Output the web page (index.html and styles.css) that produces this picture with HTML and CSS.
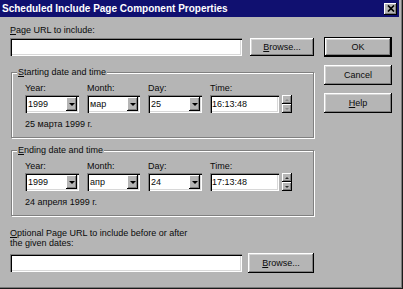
FILE: index.html
```html
<!DOCTYPE html>
<html>
<head>
<meta charset="utf-8">
<title>Scheduled Include Page Component Properties</title>
<link rel="stylesheet" href="styles.css">
</head>
<body>
<div class="window">
  <div class="titlebar">
    <span class="title">Scheduled Include Page Component Properties</span>
    <span class="close"><svg width="8" height="7" viewBox="0 0 8 7"><path d="M1 0.5 L7 6.5 M7 0.5 L1 6.5" stroke="#000" stroke-width="1.7" fill="none"/></svg></span>
  </div>
  <div class="client">
    <div class="main">
      <div class="label url-label"><u>P</u>age URL to include:</div>
      <div class="url-row">
        <div class="field url-field"></div>
        <div class="btn browse"><span><u>B</u>rowse...</span></div>
      </div>

      <fieldset class="group">
        <legend><u>S</u>tarting date and time</legend>
        <div class="date-grid">
          <div class="col"><div class="label">Year:</div><div class="field combo"><span class="val">1999</span><span class="drop"></span></div></div>
          <div class="col"><div class="label">Month:</div><div class="field combo"><span class="val">мар</span><span class="drop"></span></div></div>
          <div class="col"><div class="label">Day:</div><div class="field combo"><span class="val">25</span><span class="drop"></span></div></div>
          <div class="col"><div class="label">Time:</div><div class="time-row"><div class="field time">16:13:48</div><div class="spin light"><span class="up"></span><span class="down"></span></div></div></div>
        </div>
        <div class="date-text">25 марта 1999 г.</div>
      </fieldset>

      <fieldset class="group group-end">
        <legend><u>E</u>nding date and time</legend>
        <div class="date-grid">
          <div class="col"><div class="label">Year:</div><div class="field combo"><span class="val">1999</span><span class="drop"></span></div></div>
          <div class="col"><div class="label">Month:</div><div class="field combo"><span class="val">апр</span><span class="drop"></span></div></div>
          <div class="col"><div class="label">Day:</div><div class="field combo"><span class="val">24</span><span class="drop"></span></div></div>
          <div class="col"><div class="label">Time:</div><div class="time-row"><div class="field time">17:13:48</div><div class="spin"><span class="up"></span><span class="down"></span></div></div></div>
        </div>
        <div class="date-text">24 апреля 1999 г.</div>
      </fieldset>

      <div class="label opt-label"><u>O</u>ptional Page URL to include before or after<br>the given dates:</div>
      <div class="opt-row">
        <div class="field url-field"></div>
        <div class="btn browse2"><span><u>B</u>rowse...</span></div>
      </div>
    </div>
    <div class="side">
      <div class="btn default">OK</div>
      <div class="btn">Cancel</div>
      <div class="btn"><span><u>H</u>elp</span></div>
    </div>
  </div>
</div>
</body>
</html>
```

FILE: styles.css
```css
* { box-sizing: border-box; }
html, body { margin: 0; padding: 0; }
body {
  width: 403px;
  height: 289px;
  overflow: hidden;
  background: #b5b5b5;
  font-family: "Liberation Sans", Arial, sans-serif;
  font-size: 9px;
  color: #0a0a0a;
}
u { text-decoration: underline; text-underline-offset: 1px; }

.window {
  width: 403px;
  height: 289px;
  display: flex;
  flex-direction: column;
  box-shadow: inset -1px -1px #1a1a1a, inset -2px -2px #7a7a7a;
}

.titlebar {
  height: 17px;
  margin-right: 4px;
  background: #101070;
  display: flex;
  align-items: center;
  padding: 0 2px;
}
.title {
  flex: 1;
  color: #fff;
  font-weight: bold;
  font-size: 10px;
  white-space: nowrap;
}
.close {
  width: 13px;
  height: 12px;
  background: #b5b5b5;
  display: flex;
  align-items: center;
  justify-content: center;
  box-shadow: inset -1px -1px #000, inset 1px 1px #fff, inset -2px -2px #808080;
}

.client {
  display: grid;
  grid-template-columns: 304px 68px;
  column-gap: 10px;
  padding-left: 10px;
  align-items: start;
}

.main { padding-top: 8px; }
.label { line-height: 11px; white-space: nowrap; }

.url-row { display: flex; gap: 8px; margin-top: 2px; }
.field {
  height: 18px;
  background: #fff;
  box-shadow: inset 1px 1px #808080, inset 2px 2px #000, inset -1px -1px #fff, inset -2px -2px #d8d8d8;
}
.url-field { width: 232px; }

.btn {
  display: flex;
  align-items: center;
  justify-content: center;
  background: #b5b5b5;
  box-shadow: inset -1px -1px #000, inset 1px 1px #fff, inset -2px -2px #808080, inset 2px 2px #d4d4d4;
  white-space: nowrap;
}
.browse { width: 64px; height: 18px; }
.browse2 { width: 66px; height: 20px; }

.group {
  margin: 10px 0 0 1px;
  width: 303px;
  min-width: 0;
  padding: 5px 0 7px 13px;
  border: 1px solid #808080;
  box-shadow: inset 1px 1px #fff, 1px 1px #fff;
}
.group-end { margin-top: 6px; }
.group legend {
  font-size: 9px;
  line-height: 12px;
  padding: 0 1px;
  margin-left: -8px;
  background: #b5b5b5;
}

.date-grid {
  display: grid;
  grid-template-columns: 54px 53px 54px 82px;
  column-gap: 8px;
}
.col .label { margin-bottom: 1px; }
.combo {
  display: flex;
  align-items: center;
  padding: 2px 2px 2px 3px;
}
.val { flex: 1; }
.drop {
  width: 11px;
  height: 14px;
  background: #b5b5b5;
  box-shadow: inset -1px -1px #000, inset 1px 1px #fff, inset -2px -2px #808080;
  display: flex;
  align-items: center;
  justify-content: center;
}
.drop::after {
  content: "";
  border-left: 3px solid transparent;
  border-right: 3px solid transparent;
  border-top: 3px solid #000;
}

.time-row { display: flex; gap: 3px; }
.time {
  width: 69px;
  padding-left: 2px;
  display: flex;
  align-items: center;
}
.spin {
  width: 10px;
  height: 18px;
  display: flex;
  flex-direction: column;
}
.spin span {
  height: 9px;
  background: #b5b5b5;
  box-shadow: inset -1px -1px #000, inset 1px 1px #fff, inset -2px -2px #808080;
  display: flex;
  align-items: center;
  justify-content: center;
}
.spin .up::after {
  content: "";
  border-left: 2px solid transparent;
  border-right: 2px solid transparent;
  border-bottom: 2px solid #303030;
}
.spin .down::after {
  content: "";
  border-left: 2px solid transparent;
  border-right: 2px solid transparent;
  border-top: 2px solid #303030;
}
.spin.light .up::after { border-bottom-color: #8a8a8a; }
.spin.light .down::after { border-top-color: #8a8a8a; }

.date-text { margin-top: 6px; line-height: 11px; }

.opt-label { margin-top: 12px; line-height: 10px; }
.opt-row {
  display: flex;
  align-items: center;
  gap: 6px;
  margin-top: 5px;
}

.side {
  padding-top: 20px;
  display: flex;
  flex-direction: column;
  gap: 8px;
}
.side .btn { width: 68px; height: 20px; }
.btn.default {
  border: 1px solid #000;
}
```
